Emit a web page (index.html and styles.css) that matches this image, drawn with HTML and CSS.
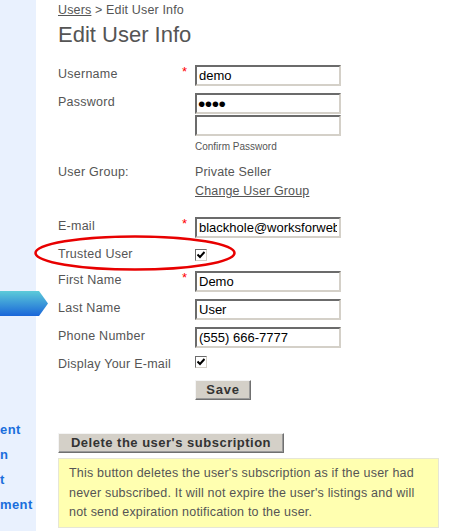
FILE: index.html
```html
<!DOCTYPE html>
<html>
<head>
<meta charset="utf-8">
<title>Edit User Info</title>
<link rel="stylesheet" href="styles.css">
</head>
<body>
<div class="page">
  <aside class="sidebar">
    <div class="arrow"></div>
    <nav class="side-links">
      <a class="side-link" href="#">ent</a>
      <a class="side-link" href="#">n</a>
      <a class="side-link" href="#">t</a>
      <a class="side-link" href="#">ment</a>
    </nav>
  </aside>
  <main class="content">
    <div class="breadcrumb"><a href="#">Users</a> &gt; Edit User Info</div>
    <h1 class="title">Edit User Info</h1>
    <form class="form">
      <div class="row">
        <div class="label">Username</div>
        <div class="req">*</div>
        <div class="field"><input class="text" type="text" value="demo"></div>
      </div>
      <div class="row">
        <div class="label">Password</div>
        <div class="req"></div>
        <div class="field">
          <input class="text pass" type="password" value="demo">
          <input class="text pass confirm" type="password" value="">
          <div class="hint">Confirm Password</div>
        </div>
      </div>
      <div class="row row-group">
        <div class="label">User Group:</div>
        <div class="req"></div>
        <div class="field plain">Private Seller<br><a href="#">Change User Group</a></div>
      </div>
      <div class="row">
        <div class="label">E-mail</div>
        <div class="req">*</div>
        <div class="field"><input class="text" type="text" value="blackhole@worksforweb.com"></div>
      </div>
      <div class="row row-check">
        <div class="label">Trusted User</div>
        <div class="req"></div>
        <div class="field"><span class="check"><svg width="8" height="8" viewBox="0 0 8 8"><path d="M0.5 3.5 L3 6 L7.5 1" fill="none" stroke="#000" stroke-width="2"/></svg></span></div>
      </div>
      <div class="row">
        <div class="label">First Name</div>
        <div class="req">*</div>
        <div class="field"><input class="text" type="text" value="Demo"></div>
      </div>
      <div class="row">
        <div class="label">Last Name</div>
        <div class="req"></div>
        <div class="field"><input class="text" type="text" value="User"></div>
      </div>
      <div class="row">
        <div class="label">Phone Number</div>
        <div class="req"></div>
        <div class="field"><input class="text" type="text" value="(555) 666-7777"></div>
      </div>
      <div class="row row-check row-display">
        <div class="label">Display Your E-mail</div>
        <div class="req"></div>
        <div class="field"><span class="check"><svg width="8" height="8" viewBox="0 0 8 8"><path d="M0.5 3.5 L3 6 L7.5 1" fill="none" stroke="#000" stroke-width="2"/></svg></span></div>
      </div>
      <div class="row">
        <div class="label"></div>
        <div class="req"></div>
        <div class="field"><button class="btn btn-save" type="button">Save</button></div>
      </div>
    </form>
    <div class="delete-section">
      <button class="btn btn-delete" type="button">Delete the user's subscription</button>
      <div class="note">This button deletes the user's subscription as if the user had never subscribed. It will not expire the user's listings and will not send expiration notification to the user.</div>
    </div>
  </main>
  <svg class="highlight" width="210" height="40" viewBox="0 0 210 40"><ellipse cx="105" cy="20" rx="99.5" ry="16.5" fill="none" stroke="#e80000" stroke-width="2.5"/></svg>
</div>
</body>
</html>
```
FILE: styles.css
```css
* { box-sizing: border-box; }
html, body { margin: 0; padding: 0; background: #fff; }
body { font-family: "Liberation Sans", Arial, sans-serif; color: #555; }
.page { display: flex; min-height: 531px; position: relative; }

.sidebar { width: 36px; flex: 0 0 36px; background: #e9f1fe; position: relative; z-index: 1; }
.arrow {
  margin-top: 291px; width: 48px; height: 25px;
  background: linear-gradient(#5ccbd9, #1a66d9);
  clip-path: polygon(0 0, 39px 0, 48px 50%, 39px 100%, 0 100%);
}
.side-links { margin-top: 101px; display: flex; flex-direction: column; align-items: flex-start; }
.side-link { font-weight: bold; font-size: 13px; line-height: 25px; color: #1a6edc; text-decoration: none; letter-spacing: 0.4px; white-space: nowrap; }

.content { padding-left: 22px; flex: 1; }
.breadcrumb { padding-top: 3px; font-size: 12.5px; line-height: 15px; letter-spacing: 0.15px; }
.breadcrumb a { color: #555; }
.title { margin: 4px 0 0; font-size: 22px; line-height: 26px; font-weight: normal; color: #555; }

.form { margin-top: 17px; }
.row { display: grid; grid-template-columns: 120px 17px 146px; margin-bottom: 7px; }
.label { font-size: 12.5px; line-height: 19px; letter-spacing: 0.25px; }
.req { color: #f00; font-size: 13px; line-height: 14px; padding-left: 4px; }
.text {
  display: block; width: 146px; height: 21px; margin: 0; padding: 0 2px;
  border: 2px solid; border-color: #6b6b6b #d4d0c8 #d4d0c8 #6b6b6b;
  font-family: "Liberation Sans", Arial, sans-serif; font-size: 13px; color: #000; background: #fff;
  outline: none;
}
.pass { font-size: 21px; letter-spacing: -0.5px; padding-left: 1px; }
.confirm { margin-top: 1px; }
.hint { font-size: 10px; line-height: 14px; margin-top: 4px; }
.row-group { margin-top: 9px; margin-bottom: 16px; }
.plain { font-size: 12.5px; line-height: 19px; letter-spacing: 0.15px; }
.plain a { color: #555; }
.row-check .field { display: flex; align-items: center; height: 19px; }
.row-display { margin-bottom: 6px; }
.row-display .field { align-items: flex-start; padding-top: 1px; }
.check {
  width: 12px; height: 12px; display: flex; align-items: center; justify-content: center;
  border: 1px solid; border-color: #6b6b6b #d4d0c8 #d4d0c8 #6b6b6b; background: #fff;
}
.btn {
  margin: 0; background: #d4d0c8; color: #333; font-family: "Liberation Sans", Arial, sans-serif;
  font-weight: bold; font-size: 13px; letter-spacing: 0.8px;
  border: 1px solid; border-color: #f4f4f4 #707070 #707070 #f4f4f4;
  box-shadow: inset -1px -1px 0 #9a9a9a;
  height: 20px; line-height: 16px;
}
.btn-save { width: 56px; padding: 0; }
.btn-delete { width: 226px; padding: 0; letter-spacing: 0.5px; }
.delete-section { margin-top: 33px; }
.note {
  margin-top: 5px; width: 381px; background: #ffffb0; border: 1px solid #e6e6d6;
  padding: 5px 8px 4px 10px; font-size: 12.5px; line-height: 19.5px; color: #555; letter-spacing: 0.2px;
}
.highlight { position: absolute; left: 30px; top: 233px; z-index: 2; pointer-events: none; }
```
